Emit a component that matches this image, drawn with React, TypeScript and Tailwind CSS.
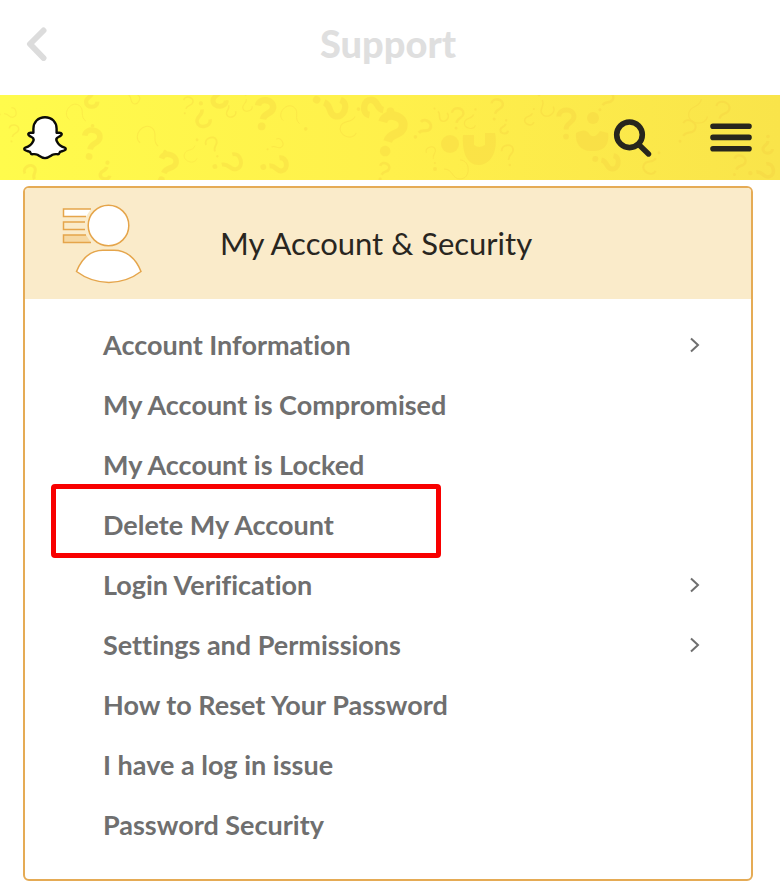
import React from 'react';

interface Topic {
  label: string;
  expandable?: boolean;
  highlighted?: boolean;
}

interface Mark {
  x: number;
  y: number;
  scale: number;
  rotate: number;
  weight: number;
}

const topics: Topic[] = [
  { label: 'Account Information', expandable: true },
  { label: 'My Account is Compromised' },
  { label: 'My Account is Locked' },
  { label: 'Delete My Account', highlighted: true },
  { label: 'Login Verification', expandable: true },
  { label: 'Settings and Permissions', expandable: true },
  { label: 'How to Reset Your Password' },
  { label: 'I have a log in issue' },
  { label: 'Password Security' },
];

// thin marks have a small weight, chunky ones a large weight
const marks: Mark[] = [
  { x: 13, y: 38, scale: 0.5, rotate: 10, weight: 3 },
  { x: 8, y: 18, scale: 0.5, rotate: 80, weight: 2 },
  { x: 32, y: 80, scale: 0.6, rotate: -30, weight: 5 },
  { x: 80, y: 22, scale: 0.9, rotate: -55, weight: 1 },
  { x: 91, y: 48, scale: 0.8, rotate: 8, weight: 7 },
  { x: 92, y: 2, scale: 0.6, rotate: 180, weight: 7 },
  { x: 106, y: 76, scale: 0.5, rotate: 190, weight: 7 },
  { x: 132, y: 2, scale: 0.5, rotate: 120, weight: 2 },
  { x: 152, y: 46, scale: 1, rotate: -50, weight: 1 },
  { x: 166, y: 72, scale: 0.8, rotate: 20, weight: 7 },
  { x: 187, y: 10, scale: 0.5, rotate: 15, weight: 3 },
  { x: 203, y: 20, scale: 0.7, rotate: 170, weight: 5 },
  { x: 193, y: 56, scale: 0.7, rotate: 200, weight: 1 },
  { x: 213, y: 52, scale: 0.6, rotate: -25, weight: 3 },
  { x: 228, y: 68, scale: 0.8, rotate: 75, weight: 5 },
  { x: 220, y: 0, scale: 0.7, rotate: 180, weight: 7 },
  { x: 230, y: 14, scale: 0.5, rotate: 160, weight: 3 },
  { x: 247, y: 8, scale: 0.5, rotate: 170, weight: 2 },
  { x: 264, y: 18, scale: 0.8, rotate: 10, weight: 8 },
  { x: 275, y: 50, scale: 0.5, rotate: 60, weight: 2 },
  { x: 275, y: 70, scale: 0.7, rotate: 80, weight: 7 },
  { x: 294, y: 24, scale: 0.9, rotate: -50, weight: 1 },
  { x: 331, y: 10, scale: 0.9, rotate: 110, weight: 7 },
  { x: 352, y: 28, scale: 0.9, rotate: 205, weight: 1 },
  { x: 377, y: 14, scale: 0.8, rotate: -80, weight: 8 },
  { x: 390, y: 38, scale: 1.1, rotate: 15, weight: 8 },
  { x: 383, y: 76, scale: 0.5, rotate: 20, weight: 5 },
  { x: 422, y: 34, scale: 0.6, rotate: 40, weight: 5 },
  { x: 441, y: 19, scale: 0.5, rotate: 130, weight: 3 },
  { x: 432, y: 60, scale: 0.5, rotate: -20, weight: 2 },
  { x: 457, y: 23, scale: 0.6, rotate: 5, weight: 4 },
  { x: 452, y: 74, scale: 1, rotate: 90, weight: 1 },
  { x: 472, y: 24, scale: 0.6, rotate: 200, weight: 2 },
  { x: 496, y: 14, scale: 0.6, rotate: 10, weight: 4 },
  { x: 508, y: 60, scale: 0.6, rotate: -10, weight: 3 },
  { x: 505, y: 32, scale: 0.4, rotate: 190, weight: 5 },
  { x: 545, y: 10, scale: 0.7, rotate: 150, weight: 2 },
  { x: 531, y: 22, scale: 0.5, rotate: 200, weight: 3 },
  { x: 566, y: 28, scale: 0.8, rotate: 0, weight: 6 },
  { x: 605, y: 6, scale: 0.6, rotate: 30, weight: 4 },
  { x: 607, y: 66, scale: 0.7, rotate: 100, weight: 7 },
  { x: 653, y: 68, scale: 0.7, rotate: 210, weight: 3 },
  { x: 686, y: 36, scale: 0.7, rotate: 30, weight: 3 },
  { x: 721, y: 18, scale: 0.7, rotate: 15, weight: 3 },
  { x: 700, y: 12, scale: 1, rotate: 190, weight: 1 },
  { x: 738, y: 70, scale: 0.6, rotate: 20, weight: 4 },
  { x: 762, y: 76, scale: 0.7, rotate: 80, weight: 5 },
  { x: 768, y: 50, scale: 0.5, rotate: 180, weight: 6 },
];

const BannerPattern: React.FC = () => (
  <svg
    className="absolute inset-0 h-full w-full text-[#f3c63c] opacity-25"
    viewBox="0 0 780 85"
    preserveAspectRatio="xMidYMid slice"
    aria-hidden="true"
  >
    {marks.map((mark) => (
      <g
        key={`${mark.x}-${mark.y}`}
        transform={`translate(${mark.x} ${mark.y}) rotate(${mark.rotate}) scale(${mark.scale})`}
      >
        <path
          d="M-9-8C-9-19 10-19 10-8C10 0 0-1 0 8"
          fill="none"
          stroke="currentColor"
          strokeWidth={mark.weight}
        />
        <circle cx="0" cy="17" r={Math.max(2, mark.weight * 0.6)} fill="currentColor" />
      </g>
    ))}
    <g fill="currentColor">
      <circle cx="450" cy="49" r="9" />
      <path d="M463 40h11v10q5 4 11 0V38h10c3 15-2 31-16 32-12 0-17-12-16-30Z" />
      <circle cx="593" cy="23" r="6" />
      <path d="M576 38q10-6 14 2 5 4 10-4l8 2c2 14-7 19-17 18-11 0-16-8-15-18Z" />
    </g>
  </svg>
);

const GhostLogo: React.FC = () => (
  <svg className="h-11 w-11" viewBox="0 0 44 44" aria-hidden="true">
    <path
      d="M22 1.2c-7 0-11.6 5-11.6 11.6v4c-1.6.3-4.4-.8-5 .8-.6 1.8 1.2 2.6 3.1 3.4 2 .9 2.7 1.900 1.800 3.900-1.500 3.400-4.400 5.600-8 6.700-1.500.5-1.300 2 .1 2.700 1.500.8 3.500 1 4.600 1.600.5 1.400.7 2.200 2.100 2.300 1.600 0 3.300-.5 5.400.6 2.300 1.500 4.300 3.300 7.500 3.300s5.200-1.800 7.500-3.300c2.100-1.100 3.800-.6 5.400-.6 1.400-.1 1.600-.9 2.100-2.300 1.100-.6 3.100-.8 4.600-1.600 1.400-.7 1.600-2.200.1-2.700-3.600-1.100-6.500-3.300-8-6.700-.9-2-.2-3 1.800-3.900 1.900-.8 3.700-1.600 3.100-3.400-.6-1.600-3.400-.5-5-.8v-4C33.600 6.200 29 1.200 22 1.200Z"
      fill="#fff"
      stroke="#0b0b08"
      strokeWidth="2.4"
      strokeLinejoin="round"
    />
  </svg>
);

const SearchIcon: React.FC = () => (
  <svg className="h-10 w-10" viewBox="0 0 40 40" fill="none" stroke="#27261d" aria-hidden="true">
    <circle cx="17.5" cy="16.8" r="12.8" strokeWidth="5.6" />
    <path d="M27.5 27.3 36.5 36" strokeWidth="5.4" strokeLinecap="round" />
  </svg>
);

const MenuIcon: React.FC = () => (
  <svg className="h-8 w-[42px]" viewBox="0 0 42 32" stroke="#27261d" strokeWidth="5.6" strokeLinecap="round" aria-hidden="true">
    <path d="M3 4.200H39M3 15.400H39M3 26.700H39" />
  </svg>
);

const AccountIcon: React.FC = () => (
  <svg className="h-20 w-20" viewBox="0 0 80 80" fill="none" stroke="#e5a54b" strokeWidth="1.5" aria-hidden="true">
    <path d="M29 5H1.500V12.500H24" fill="#fff" />
    <path d="M23 18H1.500V25.500H23" />
    <path d="M24 31H1.500V38.500H29" fill="#f6d8a2" />
    <circle cx="46.5" cy="21.5" r="20.3" fill="#fff" />
    <path
      d="M14.500 67.500C20 54 29 46.200 41 46.200H52C64 46.200 74 54 79 67.500C60 82 34 82 14.500 67.500Z"
      fill="#fff"
    />
  </svg>
);

const TopicItem: React.FC<Topic> = ({ label, expandable, highlighted }) => (
  <li className="relative">
    <a href="#" className="flex h-[60px] items-center justify-between pr-[50px] pl-[78px]">
      <span>{label}</span>
      {expandable && (
        <svg className="h-4 w-3" viewBox="0 0 12 16" fill="none" stroke="#6f6f6f" strokeWidth="2" aria-hidden="true">
          <path d="M2 1.500 9 8 2 14.500" />
        </svg>
      )}
    </a>
    {highlighted && (
      <div className="pointer-events-none absolute -top-[11px] -bottom-[3px] left-[26px] w-[390px] rounded-[4px] border-[5px] border-[#f80000]" />
    )}
  </li>
);

const App: React.FC = () => (
  <div className="min-h-screen bg-white pb-2 font-['Lato','Liberation_Sans',sans-serif] [font-variant-ligatures:none]">
    <header className="grid h-[95px] grid-cols-[1fr_auto_1fr] items-center pr-7 pb-[10px] pl-6">
      <button type="button" aria-label="Back" className="justify-self-start">
        <svg className="h-9 w-6" viewBox="0 0 24 36" fill="none" stroke="#dcdcdc" strokeWidth="6" strokeLinecap="round" strokeLinejoin="round" aria-hidden="true">
          <path d="M19.500 5.500 6 19 19.500 33" />
        </svg>
      </button>
      <h1 className="text-[38px] leading-10 font-black text-[#dfdfdf]">Support</h1>
    </header>

    <nav className="relative bg-linear-to-r from-[#fffb4c] via-[#fff04b] to-[#f9e44a]">
      <BannerPattern />
      <div className="relative flex h-[85px] items-center justify-between pr-7 pl-[23px]">
        <a href="#" aria-label="Home">
          <GhostLogo />
        </a>
        <div className="flex items-center gap-[58px]">
          <button type="button" aria-label="Search">
            <SearchIcon />
          </button>
          <button type="button" aria-label="Menu">
            <MenuIcon />
          </button>
        </div>
      </div>
    </nav>

    <main className="pt-[6px] pr-[27px] pl-[23px]">
      <section className="overflow-hidden rounded-md border-2 border-[#e5ab55]">
        <div className="flex h-[111px] items-center gap-[78px] bg-[#faebca] pl-[37px]">
          <AccountIcon />
          <h2 className="text-[31px] text-[#29261f]">My Account &amp; Security</h2>
        </div>
        <ul className="pt-4 pb-6 text-[27px] font-bold text-[#6f6f6f]">
          {topics.map((topic) => (
            <TopicItem key={topic.label} {...topic} />
          ))}
        </ul>
      </section>
    </main>
  </div>
);

export default App;
